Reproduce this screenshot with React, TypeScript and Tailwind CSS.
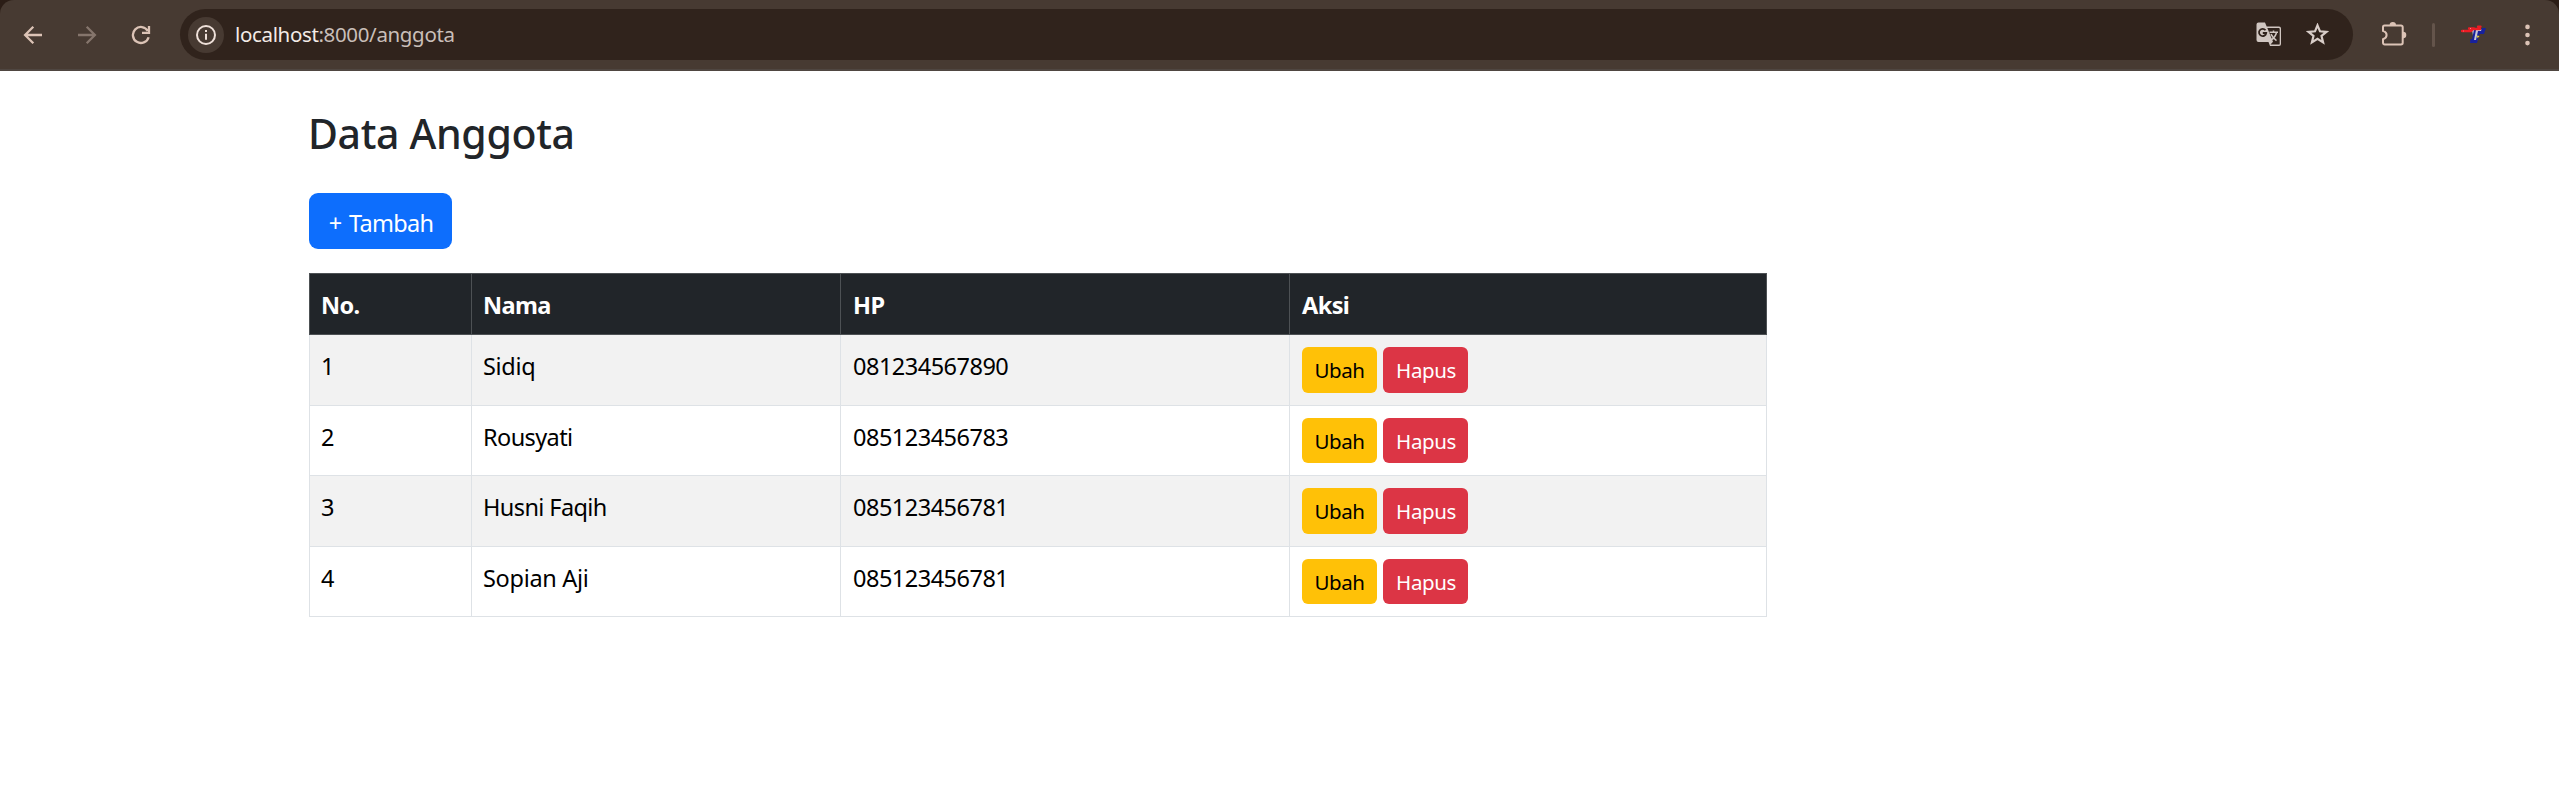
import React from "react";

const members = [
  { no: 1, name: "Sidiq", ls: "tracking-[-0.3px]", hp: "081234567890", h: "h-[71px]", b: "h-[46px]" },
  { no: 2, name: "Rousyati", ls: "tracking-[-0.6px]", hp: "085123456783", h: "h-[70px]", b: "h-[45px]" },
  { no: 3, name: "Husni Faqih", ls: "tracking-[-0.6px]", hp: "085123456781", h: "h-[71px]", b: "h-[46px]" },
  { no: 4, name: "Sopian Aji", ls: "tracking-[-0.3px]", hp: "085123456781", h: "h-[70px]", b: "h-[45px]" },
];

function Toolbar() {
  return (
    <div className="bg-[#2b1d16]">
      <header className="flex h-[71px] items-start rounded-t-[14px] border-b-2 border-[#4f4641] bg-[#473a32] pt-[9px]">
        <div className="flex h-[51px] w-[180px] shrink-0 items-center">
          <svg className="ml-[23px] h-5 w-5" viewBox="0 0 20 20" fill="none" stroke="#dcc3b6" strokeWidth="2.3">
            <path d="M19 10H2.5M10.3 1.8 2.1 10l8.2 8.2" />
          </svg>
          <svg className="ml-[34px] h-5 w-5" viewBox="0 0 20 20" fill="none" stroke="#85756c" strokeWidth="2.3">
            <path d="M1 10h16.5M9.7 1.8l8.2 8.2-8.2 8.2" />
          </svg>
          <svg className="ml-[34px] h-5 w-5" viewBox="0 0 20 20" fill="none" stroke="#dcc3b6" strokeWidth="2.3">
            <path d="M16.8 5.9A8 8 0 1 0 17.6 12.2M18 1v6.8h-7" />
          </svg>
        </div>
        <div className="flex h-[51px] w-[2173px] items-center rounded-full bg-[#30231c] pl-2">
          <div className="flex h-9 w-9 items-center justify-center rounded-full bg-[#473a32]">
            <svg className="h-5 w-5" viewBox="0 0 20 20" fill="none" stroke="#eee0d9" strokeWidth="2">
              <circle cx="10" cy="10" r="9" />
              <path d="M10 8.8v6M10 5v2" />
            </svg>
          </div>
          <div className="ml-[11px] pb-px text-[20.5px] leading-7 tracking-[-0.35px] text-[#c9bfb9]">
            <span className="text-[#f3ebe6]">localhost</span>:8000/anggota
          </div>
          <svg className="ml-auto h-[25px] w-[26px]" viewBox="0 0 26 25">
            <path d="M2.5.5H9l1.7 4H23a2 2 0 0 1 2 2V22a2 2 0 0 1-2 2H14l-1.5-4h-10a2 2 0 0 1-2-2V2.5a2 2 0 0 1 2-2Z" fill="#d0c6c1" />
            <path d="M11.3 6H22.8a.9.9 0 0 1 .9.9V21.7a.9.9 0 0 1-.9.9H14.500l2.500-2.900Z" fill="#30231c" />
            <path d="M9.500 8.300A3.600 3.600 0 1 0 10.200 11H6.800" fill="none" stroke="#30231c" strokeWidth="1.800" />
            <path d="M13.500 10.300h8.500M17.500 8.600v1.700M20.500 10.500c-.8 3.500-3 6-5.500 7.500M15 12.200c1.300 2.700 3 4.800 5.500 6.500" fill="none" stroke="#d0c6c1" strokeWidth="1.500" />
          </svg>
          <svg className="ml-6 mr-6 h-[23px] w-[23px]" viewBox="0 0 23 23" fill="none" stroke="#d8cdc8" strokeWidth="2.200">
            <path d="m11.500 2.300 2.500 6 6.500.5-5 4.200 1.600 6.400-5.600-3.500-5.600 3.500 1.600-6.400-5-4.200 6.500-.5Z" />
          </svg>
        </div>
        <div className="flex h-[51px] items-center">
          <svg className="ml-[28px] h-[25px] w-[26px]" viewBox="0 0 26 25" fill="none" stroke="#dcc3b6" strokeWidth="2">
            <path d="M3.500 3.500H20a1.700 1.700 0 0 1 1.700 1.700V20.800a1.700 1.700 0 0 1-1.700 1.700H3.700A1.700 1.700 0 0 1 2 20.800V17.200c4.800-1.400 4.800-6.900 0-8.300V5a1.500 1.500 0 0 1 1.500-1.500Z" />
            <path d="M8.600 3.200a3.200 3.200 0 0 1 6.400 0ZM22 9.800a3.300 3.300 0 0 1 0 6.600Z" fill="#dcc3b6" stroke="none" />
          </svg>
          <div className="ml-[25px] h-6 w-[3px] rounded-full bg-[#64544b]" />
          <svg className="ml-[26px] h-5 w-[26px]" viewBox="0 0 26 20">
            <path d="M11 4.500h12.500L22 9h-4l-2.500 9H9.500l1-4h2Z" fill="#c8c8d6" />
            <path d="M10.500 5h2.500l-2 9h-1.500L9 18h7l2.500-9h4.500L25 3h-4l-1 3h-3l-2 9h-2l2-10Z" fill="#17219c" />
            <path d="M1 6h9l2-2h7M8 3.500h5M17 1.700h2.500" stroke="#ee1c24" strokeWidth="2.300" strokeLinecap="round" fill="none" />
            <path d="m16 10.500 2.500.5-2 2.200Z" fill="#f2dd27" />
            <path d="M2 6h.8M9 3.500h1" stroke="#ff9aa0" strokeWidth=".8" />
          </svg>
          <svg className="ml-[38px] h-[22px] w-[5px]" viewBox="0 0 5 22" fill="#dcc3b6">
            <circle cx="2.500" cy="2.900" r="2.300" />
            <circle cx="2.500" cy="11" r="2.300" />
            <circle cx="2.500" cy="19.100" r="2.300" />
          </svg>
        </div>
      </header>
    </div>
  );
}

export default function App() {
  return (
    <div className="min-h-[808px] bg-white font-['Noto_Sans','Open_Sans',sans-serif]">
      <Toolbar />
      <main className="ml-[309px] w-[1458px] pt-9 text-[23.500px]">
        <h1 className="-ml-px h-[50px] text-[41px] leading-[53px] font-medium tracking-[-0.35px] whitespace-nowrap text-[#212529]">
          Data Anggota
        </h1>
        <button className="mt-9 flex h-14 w-[143px] items-center justify-center rounded-[9px] bg-[#0d6efd] pt-[3px] pl-px leading-9 tracking-[-0.7px] [word-spacing:2px] whitespace-nowrap text-white">
          + Tambah
        </button>
        <table className="mt-6 w-[1458px] table-fixed border-separate border-spacing-0 text-left">
          <colgroup>
            <col className="w-[163px]" />
            <col className="w-[369px]" />
            <col className="w-[449px]" />
            <col className="w-[477px]" />
          </colgroup>
          <thead>
            <tr className="h-[62px] bg-[#212529] align-top leading-9 tracking-[-0.6px] text-white *:border-y *:border-r *:border-[#4d5154] *:pt-[13px] *:font-bold">
              <th className="border-l pl-[11px]">No.</th>
              <th className="pl-[11px]">Nama</th>
              <th className="pl-3">HP</th>
              <th className="pl-3">Aksi</th>
            </tr>
          </thead>
          <tbody>
            {members.map((m) => (
              <tr
                key={m.no}
                className={`${m.h} align-top leading-9 text-black odd:bg-[#f2f2f2] *:border-r *:border-b *:border-[#dee2e6]`}
              >
                <td className="border-l pt-[13px] pl-[11px]">{m.no}</td>
                <td className={`pt-[13px] pl-[11px] ${m.ls}`}>{m.name}</td>
                <td className="pt-[13px] pl-3 tracking-[-0.500px]">{m.hp}</td>
                <td className="pt-3 pl-3">
                  <div className="flex gap-1.5 text-[20.500px] leading-8 tracking-[-0.400px]">
                    <button className={`${m.b} w-[75px] rounded-md bg-[#ffc107] text-black`}>Ubah</button>
                    <button className={`${m.b} w-[85px] rounded-md bg-[#dc3545] pl-px text-white`}>Hapus</button>
                  </div>
                </td>
              </tr>
            ))}
          </tbody>
        </table>
      </main>
    </div>
  );
}
